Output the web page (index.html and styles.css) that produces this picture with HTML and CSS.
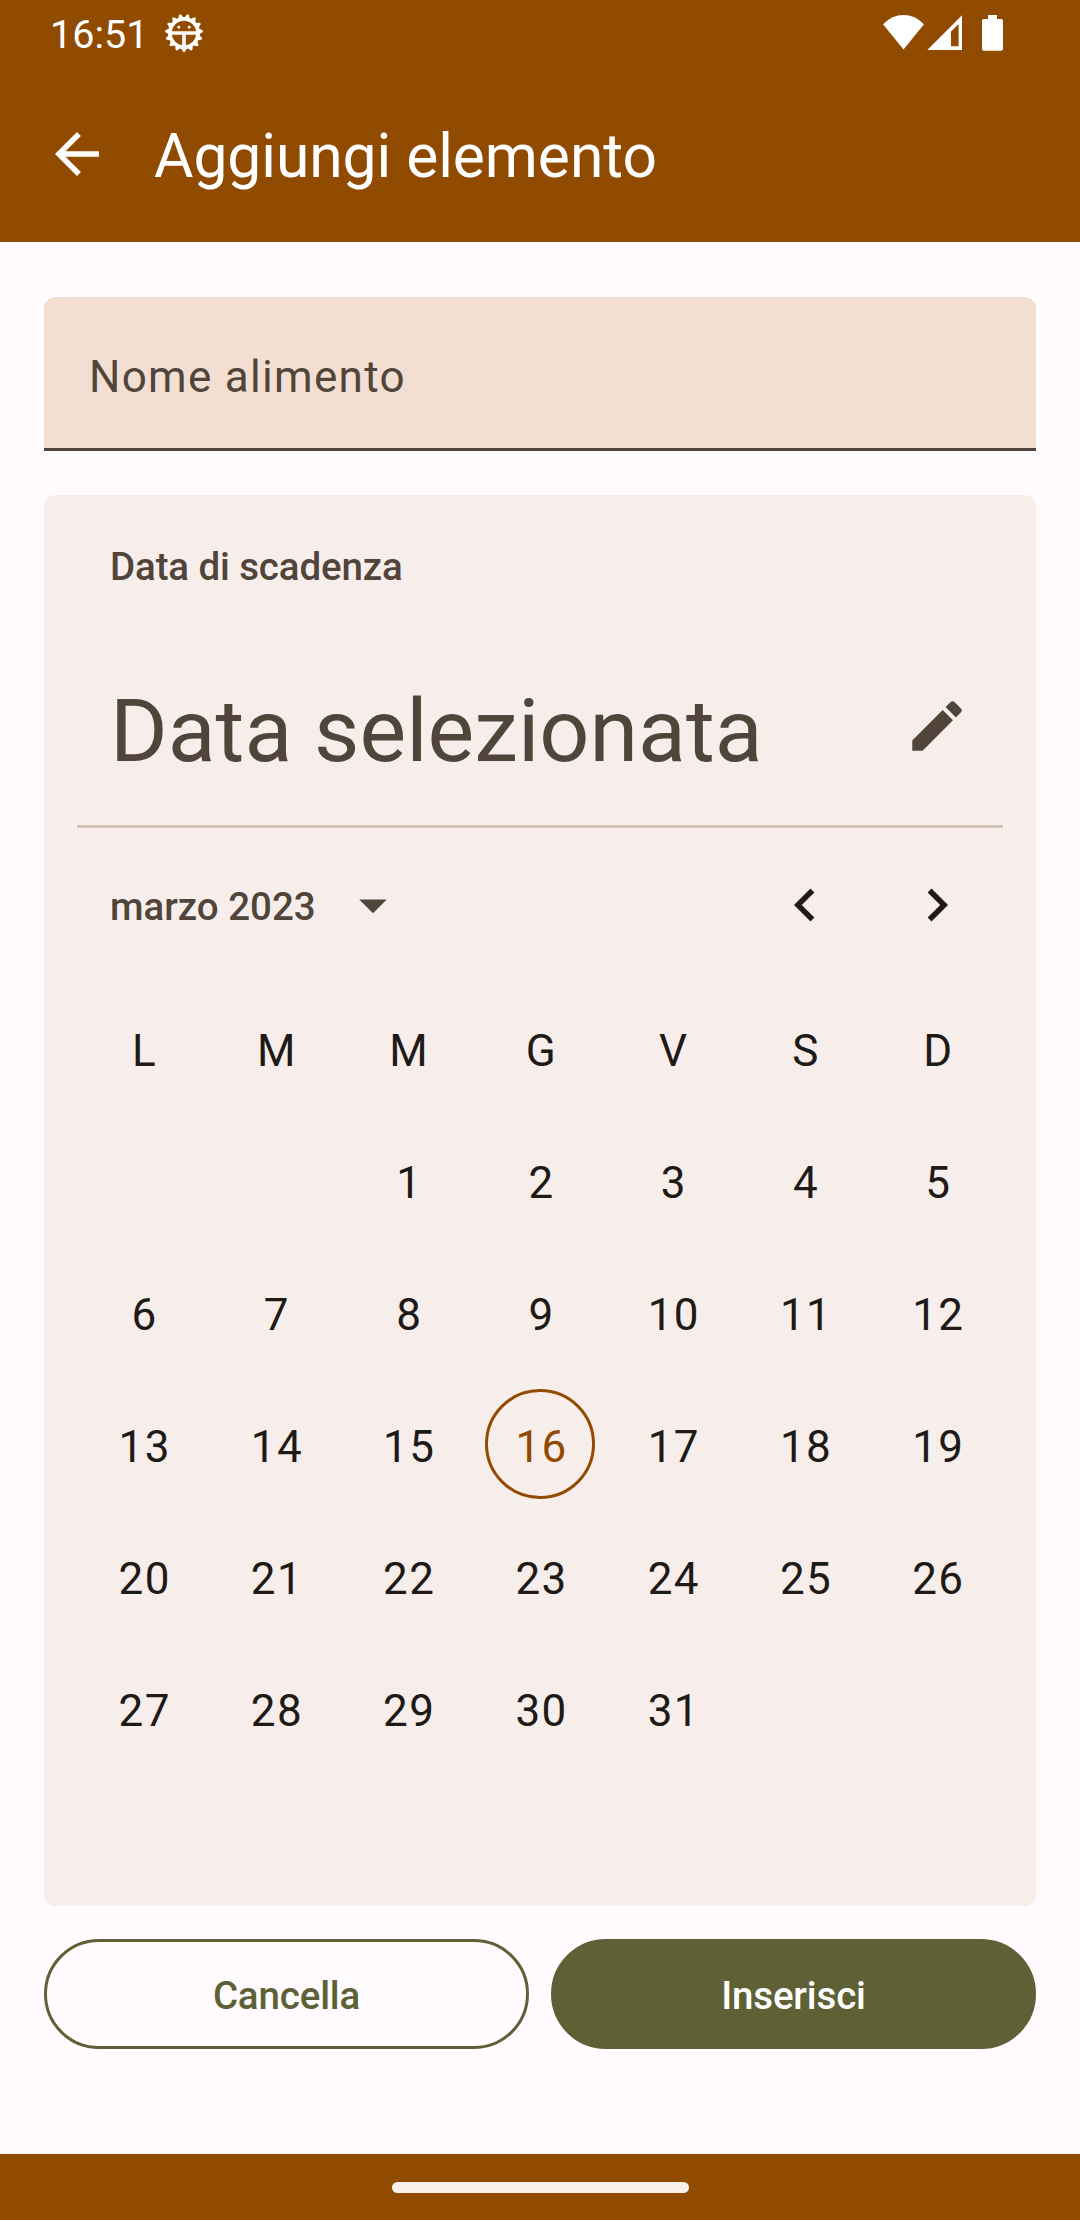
FILE: index.html
```html
<!DOCTYPE html>
<html lang="it">
<head>
<meta charset="utf-8">
<title>Aggiungi elemento</title>
<link rel="stylesheet" href="styles.css">
</head>
<body>
<div class="screen">
  <header class="top">
    <div class="status">
      <span class="time">16:51</span>
      <svg class="debug-icon" width="40" height="40" viewBox="-20 -20 40 40" fill="#fff">
        <defs><path id="tooth" d="M-3 14.8 L-1.1 18.4 Q0 19.8 1.1 18.4 L3 14.8z"/></defs>
        <circle r="14.1" fill="none" stroke="#fff" stroke-width="3.8"/>
        <use href="#tooth"/>
        <use href="#tooth" transform="rotate(24)"/>
        <use href="#tooth" transform="rotate(48)"/>
        <use href="#tooth" transform="rotate(72)"/>
        <use href="#tooth" transform="rotate(96)"/>
        <use href="#tooth" transform="rotate(120)"/>
        <use href="#tooth" transform="rotate(144)"/>
        <use href="#tooth" transform="rotate(168)"/>
        <use href="#tooth" transform="rotate(192)"/>
        <use href="#tooth" transform="rotate(216)"/>
        <use href="#tooth" transform="rotate(240)"/>
        <use href="#tooth" transform="rotate(264)"/>
        <use href="#tooth" transform="rotate(288)"/>
        <use href="#tooth" transform="rotate(312)"/>
        <use href="#tooth" transform="rotate(336)"/>
        <path d="M-13-1.8H13V1.7H1.8V13H-1.8V1.7H-13z"/>
        <circle cx="-5.2" cy="-5.8" r="1.4"/><circle cx="5.2" cy="-5.8" r="1.4"/>
      </svg>
      <svg class="signals" width="122" height="40" viewBox="882 13 122 40" fill="#fff">
        <path d="M883 24.3Q892 15 903.5 15T924 24.3L903.5 49.5z"/>
        <path fill-rule="evenodd" d="M927.3 50L962 15.2V50zM951 46.3H958.6V24L951 31.5z"/>
        <path d="M988 15h9v4h4.2q1.8 0 1.8 1.8v28q0 1.9-1.8 1.9h-17.4q-1.8 0-1.8-1.9v-28q0-1.8 1.8-1.8h4.2z"/>
      </svg>
    </div>
    <div class="appbar">
      <svg class="icon" viewBox="0 0 24 24"><path d="M20 11H7.83l5.59-5.59L12 4l-8 8 8 8 1.41-1.41L7.83 13H20v-2z"/></svg>
      <h1 class="title">Aggiungi elemento</h1>
    </div>
  </header>

  <main class="content">
    <div class="field">Nome alimento</div>

    <section class="picker">
      <div class="picker-label">Data di scadenza</div>
      <div class="picker-head">
        <span class="headline">Data selezionata</span>
        <span class="icon-button"><svg class="icon" viewBox="0 0 24 24"><path d="M3 17.25V21h3.75L17.81 9.94l-3.75-3.75L3 17.25zM20.71 7.04c.39-.39.39-1.02 0-1.41l-2.34-2.34c-.39-.39-1.02-.39-1.41 0l-1.83 1.83 3.75 3.75 1.83-1.83z"/></svg></span>
      </div>
      <div class="divider"></div>
      <div class="month-nav">
        <span class="month">marzo 2023</span>
        <svg class="icon" viewBox="0 0 24 24"><path d="M7 10l5 5 5-5z"/></svg>
        <span class="icon-button first dark"><svg class="icon" viewBox="0 0 24 24"><path d="M15.41 7.41L14 6l-6 6 6 6 1.41-1.41L10.83 12z"/></svg></span>
        <span class="icon-button dark"><svg class="icon" viewBox="0 0 24 24"><path d="M10 6L8.59 7.41 13.17 12l-4.58 4.59L10 18l6-6z"/></svg></span>
      </div>
      <div class="days">
        <span>L</span><span>M</span><span>M</span><span>G</span><span>V</span><span>S</span><span>D</span>
        <span></span><span></span><span>1</span><span>2</span><span>3</span><span>4</span><span>5</span>
        <span>6</span><span>7</span><span>8</span><span>9</span><span>10</span><span>11</span><span>12</span>
        <span>13</span><span>14</span><span>15</span><span class="today">16</span><span>17</span><span>18</span><span>19</span>
        <span>20</span><span>21</span><span>22</span><span>23</span><span>24</span><span>25</span><span>26</span>
        <span>27</span><span>28</span><span>29</span><span>30</span><span>31</span>
      </div>
    </section>

    <div class="actions">
      <button class="button outlined">Cancella</button>
      <button class="button filled">Inserisci</button>
    </div>
  </main>

  <footer class="gesture-bar"><div class="handle"></div></footer>
</div>
</body>
</html>
```

FILE: styles.css
```css
* { box-sizing: border-box; }

body {
  margin: 0;
  font-family: Roboto, sans-serif;
  color: #51443a;
}

.screen {
  display: flex;
  flex-direction: column;
  width: 1080px;
  height: 2220px;
  background: #fffbff;
}

.top {
  height: 242px;
  background: #914b00;
  color: #fff;
}

.status {
  display: flex;
  align-items: center;
  height: 66px;
  padding: 0 76px 0 50px;
}

.time {
  padding-top: 4px;
  font-size: 39.5px;
  line-height: 46px;
}

.debug-icon { margin-left: 15.5px; }

.signals { margin-left: auto; }

.appbar {
  display: flex;
  align-items: center;
  gap: 44px;
  height: 176px;
  padding-left: 44px;
}

.icon {
  display: block;
  width: 66px;
  height: 66px;
  fill: currentColor;
}

.title {
  margin: 0;
  padding-top: 6px;
  font-size: 60.5px;
  font-weight: 400;
  line-height: 76px;
  letter-spacing: -0.05px;
}

.content {
  display: flex;
  flex-direction: column;
  flex: 1;
  padding: 55px 44px 0;
}

.field {
  height: 154px;
  padding: 6px 45px 0;
  border-bottom: 3px solid #51443a;
  border-radius: 11px 11px 0 0;
  background: #f2dfd1;
  font-size: 44px;
  line-height: 148px;
  letter-spacing: 1.3px;
}

.picker {
  height: 1411px;
  margin-top: 44px;
  padding: 42px 33px 0;
  border-radius: 11px;
  background: #f7eeec;
}

.picker-label {
  padding-left: 33px;
  font-size: 38.5px;
  font-weight: 500;
  line-height: 60px;
  letter-spacing: -0.12px;
}

.picker-head {
  display: flex;
  align-items: center;
  height: 132px;
  margin-top: 63px;
  padding-left: 33px;
}

.headline {
  padding-top: 10px;
  font-size: 88px;
  line-height: 110px;
}

.icon-button {
  display: grid;
  place-items: center;
  width: 132px;
  height: 132px;
}

.picker-head .icon-button { margin-left: auto; }

.icon-button.first { margin-left: auto; }

.dark { color: #201a17; }

.divider {
  height: 3px;
  margin-top: 33px;
  background: #d5c3b5;
}

.month-nav {
  display: flex;
  align-items: center;
  height: 132px;
  margin-top: 10.5px;
  padding-left: 33px;
}

.month {
  width: 230px;
  padding-top: 4px;
  font-size: 38.5px;
  font-weight: 500;
  line-height: 55px;
  letter-spacing: -0.03px;
}

.days {
  display: grid;
  grid-template-columns: repeat(7, 1fr);
  grid-auto-rows: 132px;
  margin-top: 11.5px;
  color: #201a17;
  font-size: 44px;
  letter-spacing: 1.375px;
  line-height: 104px;
  text-align: center;
}

.days span {
  justify-self: center;
  align-self: center;
  width: 110px;
  height: 110px;
  padding: 6px 0 0 3px;
}

.days .today {
  padding-top: 3px;
  border: 3px solid #914b00;
  border-radius: 50%;
  color: #914b00;
}

.actions {
  display: grid;
  grid-template-columns: 1fr 1fr;
  gap: 22px;
  margin-top: 33px;
}

.button {
  height: 110px;
  padding: 2px 0 0;
  border: 3px solid #5d6135;
  border-radius: 55px;
  font: 500 38.5px/55px Roboto, sans-serif;
  letter-spacing: -0.15px;
}

.outlined {
  background: transparent;
  color: #5d6135;
}

.filled {
  background: #5d6135;
  color: #fff;
}

.gesture-bar {
  height: 66px;
  padding-top: 27.5px;
  background: #914b00;
}

.handle {
  width: 297px;
  height: 11px;
  margin: 0 auto;
  border-radius: 6px;
  background: #f7f1ea;
}
```
